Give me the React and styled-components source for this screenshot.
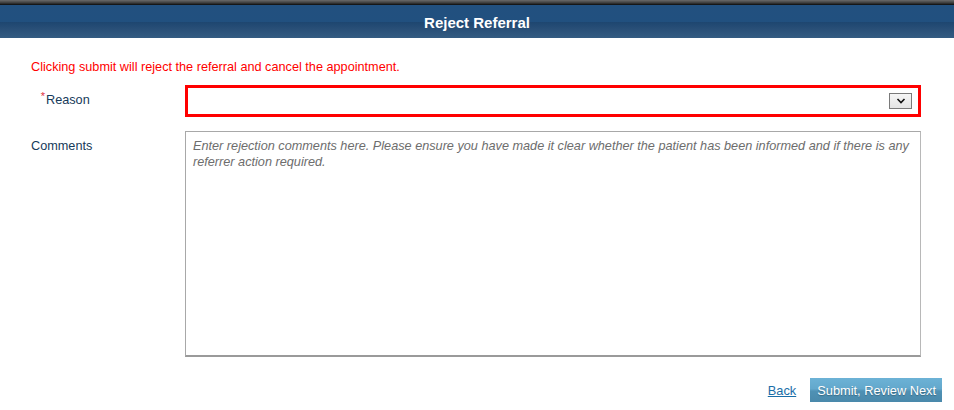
import React from "react";
import styled, { createGlobalStyle } from "styled-components";

const Global = createGlobalStyle`
  html, body { margin: 0; padding: 0; background: #fff; }
  body { font-family: Arial, "Liberation Sans", sans-serif; font-size: 12.7px; }
`;

const Page = styled.div`
  width: 954px;
  height: 410px;
  overflow: hidden;
  background: #fff;
`;

const TopStrip = styled.div`
  height: 5px;
  background: linear-gradient(to bottom, #6a6a6a 0%, #3a3a3a 60%, #0a0a0a 100%);
`;

const TitleBar = styled.div`
  height: 33px;
  display: flex;
  align-items: center;
  justify-content: center;
  background: linear-gradient(
    to bottom,
    #22507f 0%,
    #21507f 50%,
    #1e4670 52%,
    #2a5078 75%,
    #345c82 100%
  );
  color: #fff;
  font-weight: bold;
  font-size: 15px;
  padding-top: 1px;
  box-sizing: border-box;
`;

const Body = styled.div`
  padding: 21px 33px 0 31px;
`;

const Warning = styled.div`
  color: #ff0000;
  font-size: 12.7px;
  line-height: 16px;
  margin-bottom: 10px;
`;

const FormGrid = styled.div`
  display: grid;
  grid-template-columns: 154px 1fr;
  row-gap: 14px;
`;

const Label = styled.div`
  color: #163a5a;
  font-size: 12.7px;
  line-height: 14px;
  padding-top: ${(p) => p.$top}px;
  display: flex;
  align-items: flex-start;
`;

const Star = styled.span`
  color: #e03040;
  font-size: 11px;
  line-height: 10px;
  width: 15px;
  text-align: right;
  padding-right: 1px;
  box-sizing: border-box;
  margin-top: -2px;
`;

const SelectBox = styled.div`
  height: 32px;
  box-sizing: border-box;
  border: 3px solid #ff0000;
  display: flex;
  align-items: center;
  justify-content: flex-end;
  padding-right: 6px;
`;

const DropButton = styled.div`
  width: 23px;
  height: 16px;
  box-sizing: border-box;
  border: 1px solid #7a7a7a;
  background: linear-gradient(to bottom, #f6f6f6, #e4e4e4);
  display: flex;
  align-items: center;
  justify-content: center;
`;

const TextArea = styled.div`
  height: 226px;
  box-sizing: border-box;
  border: 1px solid #a8a8a8;
  border-bottom: 2px solid #9a9a9a;
  border-right: 1px solid #b8b8b8;
  padding: 6px 7px;
  color: #6d6d6d;
  font-style: italic;
  font-size: 12.7px;
  line-height: 16px;
`;

const Actions = styled.div`
  display: flex;
  justify-content: flex-end;
  align-items: center;
  gap: 14px;
  margin-top: 21px;
  margin-right: -21px;
`;

const BackLink = styled.a`
  color: #1a6ea8;
  text-decoration: underline;
  font-size: 12.8px;
  cursor: pointer;
`;

const SubmitButton = styled.button`
  height: 24px;
  padding: 0 6px 0 7px;
  border: none;
  background: linear-gradient(to bottom, #6cb2d6 0%, #63a8cc 45%, #4f91b4 55%, #4a89ab 100%);
  color: #fff;
  font-family: Arial, "Liberation Sans", sans-serif;
  font-size: 12.8px;
  text-shadow: 0 1px 1px rgba(0, 0, 0, 0.25);
  cursor: pointer;
`;

export default function App() {
  return (
    <Page>
      <Global />
      <TopStrip />
      <TitleBar>Reject Referral</TitleBar>
      <Body>
        <Warning>Clicking submit will reject the referral and cancel the appointment.</Warning>
        <FormGrid>
          <Label $top={8}>
            <Star>*</Star>
            Reason
          </Label>
          <SelectBox>
            <DropButton>
              <svg width="10" height="6" viewBox="0 0 10 6">
                <path d="M1.5 1 L5 4.5 L8.5 1" stroke="#111" strokeWidth="1.6" fill="none" />
              </svg>
            </DropButton>
          </SelectBox>
          <Label $top={8}>Comments</Label>
          <TextArea>
            Enter rejection comments here. Please ensure you have made it clear whether the patient has been informed and if there is any referrer action required.
          </TextArea>
        </FormGrid>
        <Actions>
          <BackLink>Back</BackLink>
          <SubmitButton>Submit, Review Next</SubmitButton>
        </Actions>
      </Body>
    </Page>
  );
}
